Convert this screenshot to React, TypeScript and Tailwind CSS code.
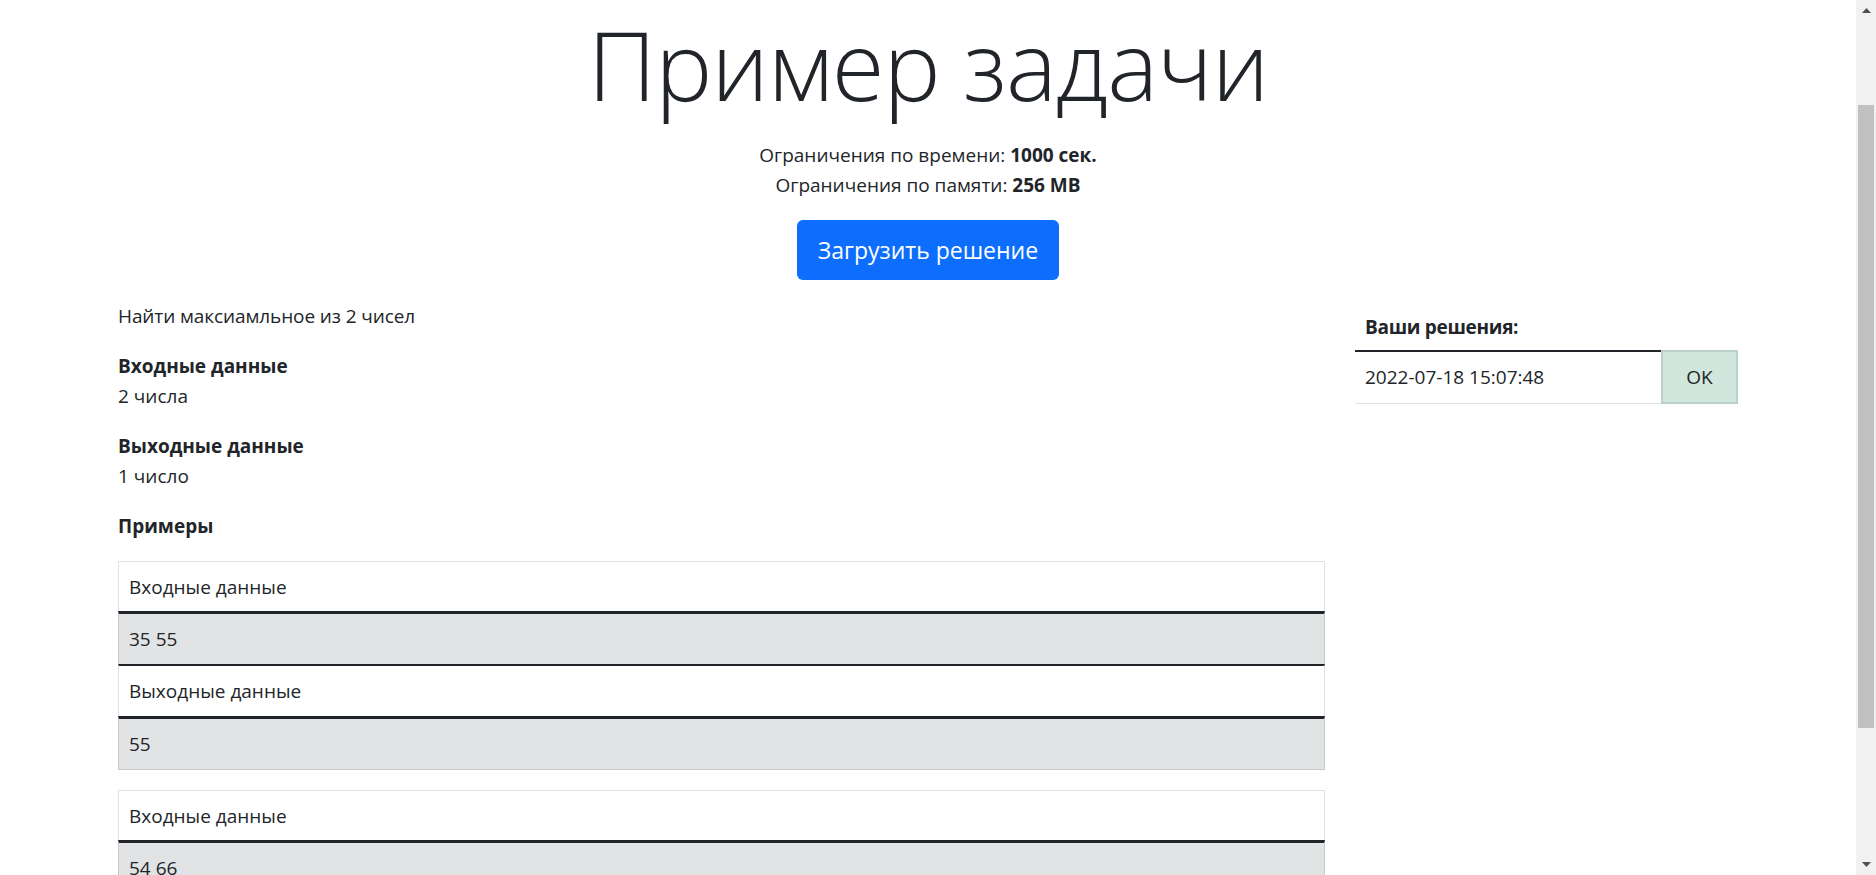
import React from "react";

const EXAMPLES = [
  { input: "35 55", output: "55" },
  { input: "54 66", output: "66" },
];

function ExampleTable({ input, output }: { input: string; output: string }) {
  return (
    <div className="border-t border-[#dee2e6]">
      <div className="h-[49px] border-x border-[#dee2e6] bg-white px-[10px] pt-[10px] leading-[30px]">
        Входные данные
      </div>
      <div className="h-[53px] border-x border-t-[3px] border-x-[#c6c7c8] border-t-[#212529] bg-[#e2e3e5] px-[10px] pt-[10px] leading-[30px]">
        {input}
      </div>
      <div className="h-[52px] border-x border-t-[2px] border-x-[#dee2e6] border-t-[#212529] bg-white px-[10px] pt-[10px] leading-[30px]">
        Выходные данные
      </div>
      <div className="h-[54px] border-x border-t-[3px] border-b border-x-[#c6c7c8] border-t-[#212529] border-b-[#c6c7c8] bg-[#e2e3e5] px-[10px] pt-[10px] leading-[30px]">
        {output}
      </div>
    </div>
  );
}

function Scrollbar() {
  return (
    <div className="flex h-full w-[20px] shrink-0 flex-col bg-[#f1f1f1]">
      <div className="flex h-[20px] items-center justify-center">
        <svg width="9" height="5" viewBox="0 0 9 5">
          <path d="M0 5 L4.5 0 L9 5 Z" fill="#505050" />
        </svg>
      </div>
      <div className="h-[85px]" />
      <div className="mx-[2px] h-[623px] bg-[#c1c1c1]" />
      <div className="flex-1" />
      <div className="flex h-[22px] items-center justify-center">
        <svg width="9" height="5" viewBox="0 0 9 5">
          <path d="M0 0 L4.5 5 L9 0 Z" fill="#505050" />
        </svg>
      </div>
    </div>
  );
}

export default function App() {
  return (
    <div className="flex h-[875px] w-full overflow-hidden bg-white font-['Open_Sans','Noto_Sans',sans-serif] text-[19px] leading-[30px] text-[#212529]">
      <main className="min-w-0 flex-1">
        {/* Header */}
        <div className="flex flex-col items-center">
          <h1 className="mb-[16px] pt-[4px] text-[96px] font-light leading-[120px] tracking-[-1px]">Пример задачи</h1>
          <p>
            Ограничения по времени: <b className="font-bold">1000 сек.</b>
          </p>
          <p>
            Ограничения по памяти: <b className="font-bold">256 MB</b>
          </p>
          <button className="mt-[20px] h-[60px] rounded-[6px] bg-[#0d6efd] px-[21px] text-[23px] leading-[36px] text-white">
            Загрузить решение
          </button>
        </div>

        {/* Body */}
        <div className="mt-[21px] flex gap-[30px] pl-[118px]">
          <section className="w-[1207px]">
            <p className="mb-[20px] tracking-[-0.1px]">Найти максиамльное из 2 чисел</p>
            <div className="mb-[20px]">
              <p className="font-bold">Входные данные</p>
              <p>2 числа</p>
            </div>
            <div className="mb-[20px]">
              <p className="font-bold">Выходные данные</p>
              <p>1 число</p>
            </div>
            <p className="mb-[20px] font-bold">Примеры</p>
            <div className="flex flex-col gap-[20px]">
              {EXAMPLES.map((ex) => (
                <ExampleTable key={ex.input} input={ex.input} output={ex.output} />
              ))}
            </div>
          </section>

          <aside className="w-[383px]">
            <div className="h-[49px] px-[10px] pt-[11px] font-bold tracking-[-0.3px]">Ваши решения:</div>
            <div className="flex h-[54px]">
              <div className="flex flex-1 items-center border-t-[2px] border-b border-t-[#212529] border-b-[#dee2e6] px-[10px] pb-[1px]">
                2022-07-18 15:07:48
              </div>
              <div className="flex w-[77px] items-center justify-center border-2 border-[#bcd0c7] bg-[#d1e7dd]">
                OK
              </div>
            </div>
          </aside>
        </div>
      </main>
      <Scrollbar />
    </div>
  );
}
